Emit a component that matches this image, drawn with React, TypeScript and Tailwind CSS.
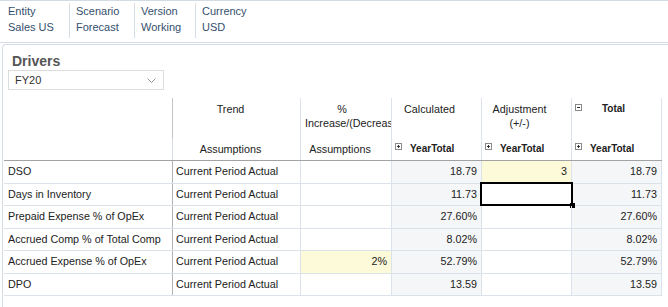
import React from "react";

type Row = {
  label: string;
  inc?: string;
  incYellow?: boolean;
  calc: string;
  adj?: string;
  adjYellow?: boolean;
  total: string;
  selected?: boolean;
};

const rows: Row[] = [
  { label: "DSO", calc: "18.79", adj: "3", adjYellow: true, total: "18.79" },
  { label: "Days in Inventory", calc: "11.73", total: "11.73", selected: true },
  { label: "Prepaid Expense % of OpEx", calc: "27.60%", total: "27.60%" },
  { label: "Accrued Comp % of Total Comp", calc: "8.02%", total: "8.02%" },
  { label: "Accrued Expense % of OpEx", inc: "2%", incYellow: true, calc: "52.79%", total: "52.79%" },
  { label: "DPO", calc: "13.59", total: "13.59" },
];

const heights = ["h-[23px]", "h-[22px]", "h-[23px]", "h-[22px]", "h-[23px]", "h-[22px]"];

function BoxIcon({ plus }: { plus: boolean }) {
  return (
    <svg width="7" height="7" viewBox="0 0 7 7" className="shrink-0">
      <rect x="0.5" y="0.5" width="6" height="6" fill="#fff" stroke="#8a8a8a" />
      <rect x="2" y="3" width="3" height="1" fill="#333" />
      {plus && <rect x="3" y="2" width="1" height="3" fill="#333" />}
    </svg>
  );
}

function Chevron() {
  return (
    <svg width="9" height="5" viewBox="0 0 9 5">
      <polyline points="0.5,0.5 4.5,4.5 8.5,0.5" fill="none" stroke="#9a9a9a" strokeWidth="1" />
    </svg>
  );
}

function PovItem({ label, value, first }: { label: string; value: string; first?: boolean }) {
  return (
    <div
      className={`h-[35px] border-r border-[#d5dde6] leading-[16px] ${first ? "w-[70px] pl-[8px]" : ""}`}
    >
      <div>{label}</div>
      <div>{value}</div>
    </div>
  );
}

export default function App() {
  return (
    <div className="w-[668px] h-[307px] overflow-hidden bg-white font-['Liberation_Sans',Arial,sans-serif] text-[#222]">
      {/* POV bar */}
      <div className="h-[43px] border-t border-b border-[#d3dbe4] pt-[2px] flex text-[11px] text-[#34506e]">
        <PovItem label="Entity" value="Sales US" first />
        <div className="w-[65px] pl-[6px] h-[35px] border-r border-[#d5dde6] leading-[16px]">
          <div>Scenario</div>
          <div>Forecast</div>
        </div>
        <div className="w-[61px] pl-[6px] h-[35px] border-r border-[#d5dde6] leading-[16px]">
          <div>Version</div>
          <div>Working</div>
        </div>
        <div className="pl-[6px] h-[35px] leading-[16px]">
          <div>Currency</div>
          <div>USD</div>
        </div>
      </div>

      {/* Panel */}
      <div className="mt-[1px] ml-[2px] h-[270px] border-l border-t border-[#d3dbe4] rounded-tl-[4px]">
        <div className="pt-[8px] pl-[9px] text-[14px] leading-[16px] font-bold text-[#555]">Drivers</div>
        <div className="mt-[1px] ml-[5px] w-[156px] h-[20px] border border-[#dcdcdc] flex items-center justify-between pl-[6px] pr-[7px] text-[11px] text-[#333]">
          <span>FY20</span>
          <Chevron />
        </div>

        {/* Grid */}
        <div className="mt-[8px] ml-[1px] w-[658px] text-[10.75px] leading-[14px]">
          {/* Header row 1 */}
          <div className="flex h-[40px]">
            <div className="w-[169px] border-r border-[#c4c4c4]" />
            <div className="w-[128px] border-r border-[#dbe2ea] pt-[4px] pr-[12px] text-center text-[#222]">
              Trend
            </div>
            <div className="w-[91px] border-r border-[#dbe2ea] pt-[4px] pl-[4px] overflow-hidden">
              <div className="pr-[12px] text-center">%</div>
              <div className="whitespace-nowrap text-left">Increase/(Decrease)</div>
            </div>
            <div className="w-[90px] border-r border-[#dbe2ea] pt-[4px] pr-[14px] text-center">
              Calculated
            </div>
            <div className="w-[90px] border-r border-[#dbe2ea] pt-[4px] pr-[14px] text-center">
              <div>Adjustment</div>
              <div>(+/-)</div>
            </div>
            <div className="relative w-[90px] border-r border-[#dbe2ea] pt-[4px] pr-[6px] text-center text-[10px] font-bold">
              <div className="absolute left-[3px] top-[6px]">
                <BoxIcon plus={false} />
              </div>
              Total
            </div>
          </div>
          {/* Header row 2 */}
          <div className="flex h-[23px] border-b border-[#a3a3a3]">
            <div className="w-[169px] border-r border-[#d5dbe2]" />
            <div className="w-[128px] border-r border-[#dbe2ea] pt-[4px] pr-[12px] text-center">
              Assumptions
            </div>
            <div className="w-[91px] border-r border-[#dbe2ea] pt-[4px] pl-[4px] pr-[16px] text-center overflow-hidden whitespace-nowrap">
              Assumptions
            </div>
            {[0, 1, 2].map((i) => (
              <div
                key={i}
                className="w-[90px] border-r border-[#dbe2ea] pt-[4px] pl-[3px] flex items-start text-[10px] font-bold"
              >
                <div className="mt-[1px]">
                  <BoxIcon plus />
                </div>
                <span className="ml-[8px]">YearTotal</span>
              </div>
            ))}
          </div>

          {/* Data rows */}
          {rows.map((r, i) => (
            <div key={r.label} className={`flex ${heights[i]} border-b border-[#dbe2ea]`}>
              <div className="w-[169px] border-r border-[#b3b3b3] pl-[4px] pt-[3px] whitespace-nowrap overflow-hidden">
                {r.label}
              </div>
              <div className="w-[128px] border-r border-[#dbe2ea] pl-[3px] pt-[3px] whitespace-nowrap">
                Current Period Actual
              </div>
              <div
                className={`w-[91px] border-r border-[#dbe2ea] pr-[4px] pt-[3px] text-right ${
                  r.incYellow ? "bg-[#fdfad9]" : ""
                }`}
              >
                {r.inc ?? ""}
              </div>
              <div className="w-[90px] border-r border-[#dbe2ea] bg-[#f5f6f7] pr-[4px] pt-[3px] text-right">
                {r.calc}
              </div>
              <div
                className={`relative w-[90px] border-r border-[#dbe2ea] pr-[4px] pt-[3px] text-right ${
                  r.adjYellow ? "bg-[#fdfad9]" : ""
                }`}
              >
                {r.adj ?? ""}
                {r.selected && (
                  <>
                    <div className="absolute left-[-2px] top-[-2px] right-[-2px] bottom-[-1px] border-2 border-black" />
                    <div className="absolute right-[-4px] bottom-[-3px] w-[5px] h-[5px] bg-black" />
                  </>
                )}
              </div>
              <div className="w-[90px] border-r border-[#dbe2ea] bg-[#f5f6f7] pr-[4px] pt-[3px] text-right">
                {r.total}
              </div>
            </div>
          ))}
        </div>
      </div>
    </div>
  );
}
